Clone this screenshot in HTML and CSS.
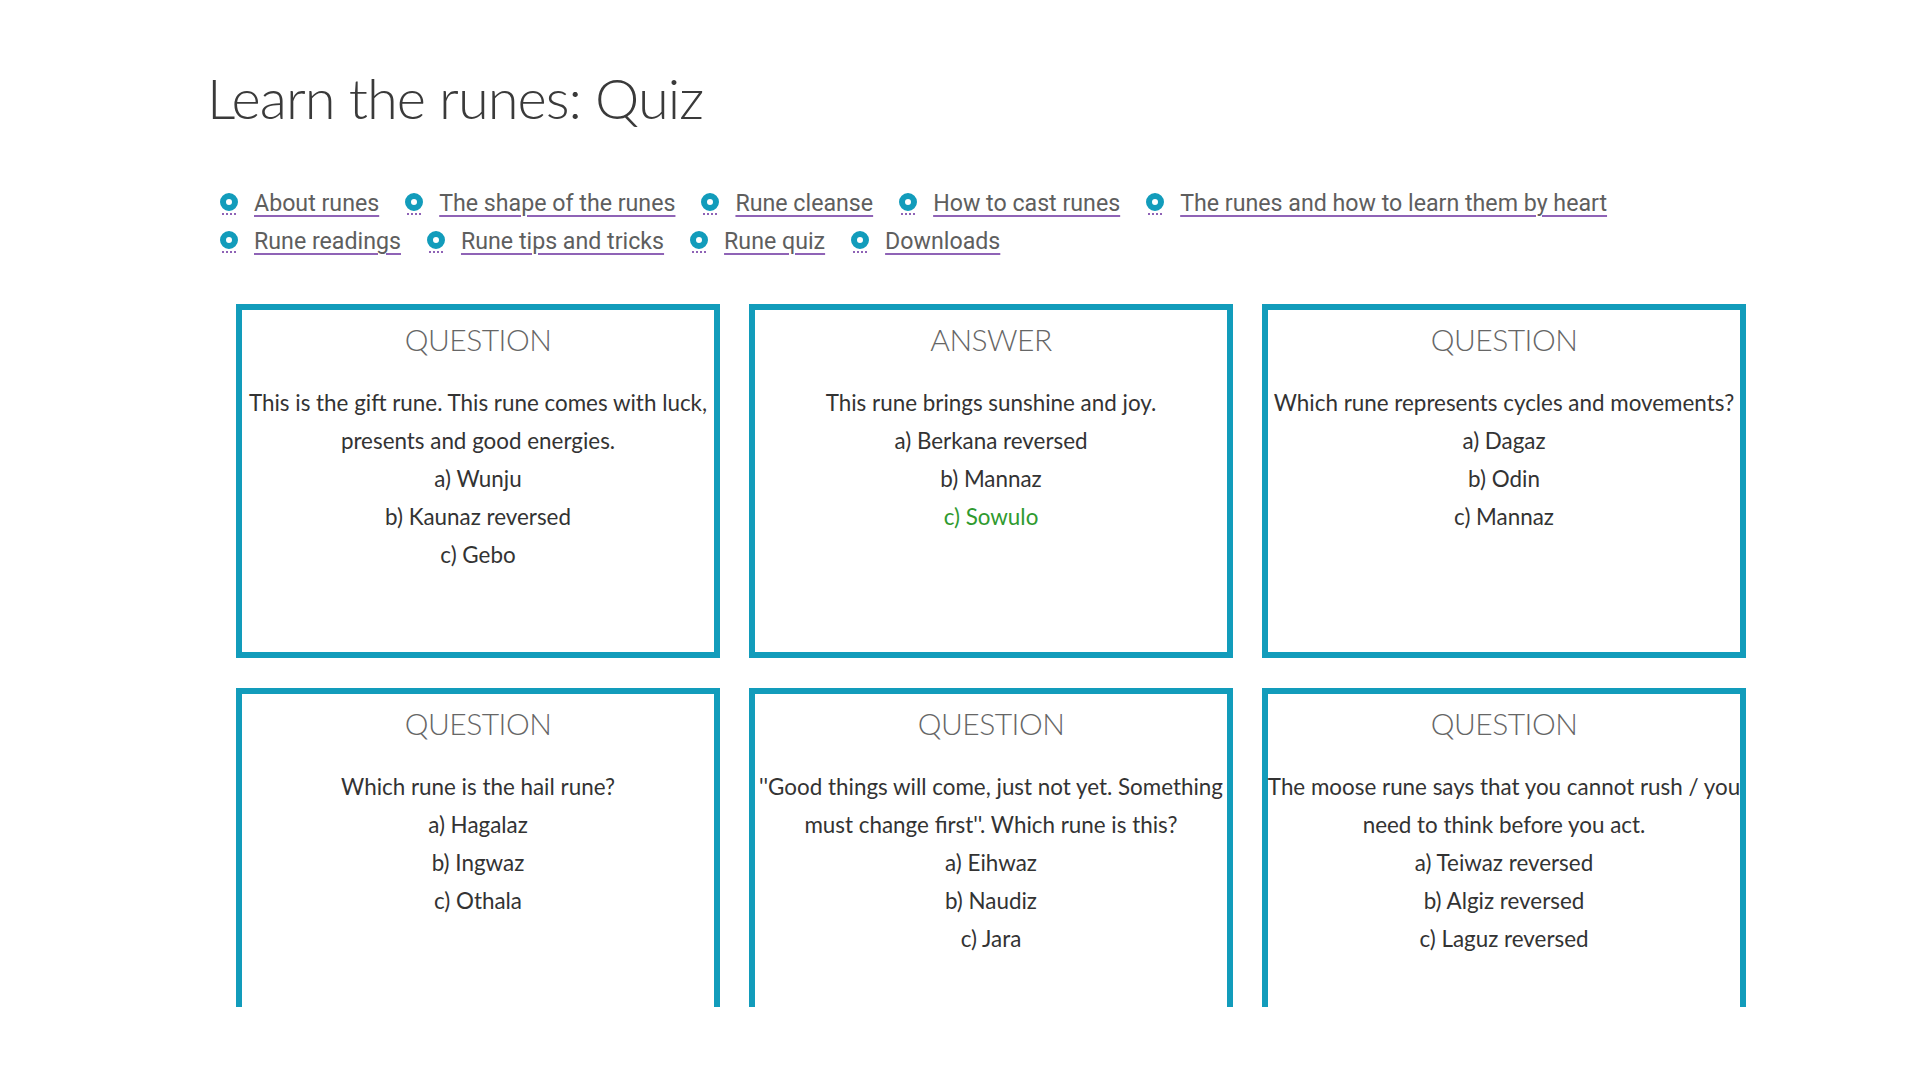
FILE: index.html
```html
<!DOCTYPE html>
<html lang="en">
<head>
<meta charset="utf-8">
<title>Learn the runes: Quiz</title>
<link rel="stylesheet" href="styles.css">
</head>
<body>
<div class="page">
  <h1 class="title">Learn the runes: Quiz</h1>
  <nav class="toc">
    <a class="toc-link" href="#"><span class="bullet"></span><span class="label">About runes</span></a>
    <a class="toc-link" href="#"><span class="bullet"></span><span class="label">The shape of the runes</span></a>
    <a class="toc-link" href="#"><span class="bullet"></span><span class="label">Rune cleanse</span></a>
    <a class="toc-link" href="#"><span class="bullet"></span><span class="label">How to cast runes</span></a>
    <a class="toc-link" href="#"><span class="bullet"></span><span class="label">The runes and how to learn them by heart</span></a>
    <a class="toc-link" href="#"><span class="bullet"></span><span class="label">Rune readings</span></a>
    <a class="toc-link" href="#"><span class="bullet"></span><span class="label">Rune tips and tricks</span></a>
    <a class="toc-link" href="#"><span class="bullet"></span><span class="label">Rune quiz</span></a>
    <a class="toc-link" href="#"><span class="bullet"></span><span class="label">Downloads</span></a>
  </nav>
  <div class="cards">
    <div class="card">
      <h2 class="card-head">QUESTION</h2>
      <p class="card-body">This is the gift rune. This rune comes with luck,<br>presents and good energies.<br>a) Wunju<br>b) Kaunaz reversed<br>c) Gebo</p>
    </div>
    <div class="card">
      <h2 class="card-head">ANSWER</h2>
      <p class="card-body">This rune brings sunshine and joy.<br>a) Berkana reversed<br>b) Mannaz<br><span class="correct">c) Sowulo</span></p>
    </div>
    <div class="card">
      <h2 class="card-head">QUESTION</h2>
      <p class="card-body">Which rune represents cycles and movements?<br>a) Dagaz<br>b) Odin<br>c) Mannaz</p>
    </div>
    <div class="card">
      <h2 class="card-head">QUESTION</h2>
      <p class="card-body">Which rune is the hail rune?<br>a) Hagalaz<br>b) Ingwaz<br>c) Othala</p>
    </div>
    <div class="card">
      <h2 class="card-head">QUESTION</h2>
      <p class="card-body">''Good things will come, just not yet. Something<br>must change first''. Which rune is this?<br>a) Eihwaz<br>b) Naudiz<br>c) Jara</p>
    </div>
    <div class="card">
      <h2 class="card-head">QUESTION</h2>
      <p class="card-body">The moose rune says that you cannot rush / you<br>need to think before you act.<br>a) Teiwaz reversed<br>b) Algiz reversed<br>c) Laguz reversed</p>
    </div>
  </div>
</div>
</body>
</html>
```
FILE: styles.css
```css
html, body {
  margin: 0;
  padding: 0;
  background: #ffffff;
}

body {
  font-family: "Lato", "Liberation Sans", sans-serif;
  color: #333333;
}

.page {
  padding-left: 207px;
  width: 1600px;
}

.title {
  margin: 63px 0 0 0;
  font-family: "Lato", sans-serif;
  font-weight: 300;
  font-size: 56px;
  line-height: 70px;
  color: #3a3a3a;
  letter-spacing: -1px;
}

.toc {
  display: flex;
  flex-wrap: wrap;
  column-gap: 26px;
  width: 1450px;
  margin: 51px 0 0 13px;
  font-family: "Roboto", sans-serif;
  font-size: 23.2px;
  line-height: 38px;
}

.toc-link {
  display: inline-flex;
  align-items: center;
  gap: 16px;
  color: #5e5e5e;
  text-decoration: none;
}

.bullet {
  box-sizing: border-box;
  width: 18px;
  height: 18px;
  border: 6px solid #129cbb;
  border-radius: 50%;
  background: #ffffff;
  position: relative;
  top: -1px;
}

.bullet::after {
  content: "";
  position: absolute;
  left: -4px;
  right: -4px;
  bottom: -10px;
  border-bottom: 2px dotted #8f63b6;
}

.label {
  text-decoration: underline;
  text-decoration-color: #8f63b6;
  text-decoration-thickness: 2px;
  text-underline-offset: 4px;
}

.cards {
  display: grid;
  grid-template-columns: repeat(3, 484px);
  grid-auto-rows: 354px;
  column-gap: 29px;
  row-gap: 30px;
  margin: 44px 0 0 29px;
  height: 703px;
  overflow: hidden;
}

.card {
  box-sizing: border-box;
  border: 6px solid #129cbb;
  padding-top: 10px;
  text-align: center;
  background: #ffffff;
}

.card-head {
  margin: 0;
  font-family: "Lato", sans-serif;
  font-weight: 300;
  font-size: 30px;
  line-height: 38px;
  color: #666666;
  letter-spacing: -0.5px;
}

.card-body {
  margin: 26px -20px 0 -20px;
  font-family: "Lato", sans-serif;
  font-weight: 400;
  font-size: 22.4px;
  line-height: 38px;
  color: #333333;
  white-space: nowrap;
}

.correct {
  color: #2f9a2f;
}
```
